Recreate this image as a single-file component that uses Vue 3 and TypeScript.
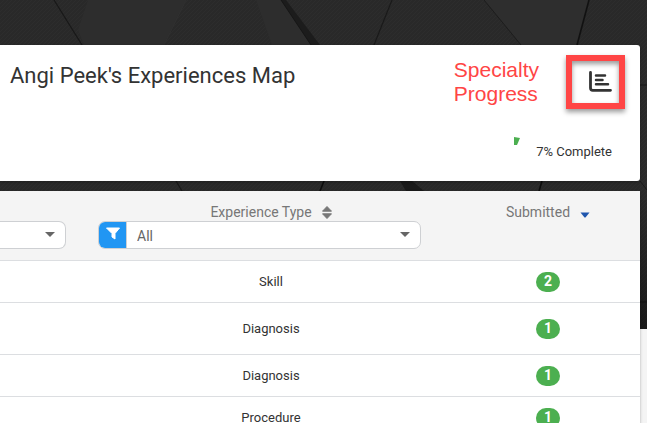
<script setup lang="ts">
import { ref } from 'vue'

interface Row {
  type: string
  submitted: number
  tall?: boolean
}

const rows: Row[] = [
  { type: 'Skill', submitted: 2 },
  { type: 'Diagnosis', submitted: 1, tall: true },
  { type: 'Diagnosis', submitted: 1 },
  { type: 'Procedure', submitted: 1 },
]

const nameFilter = ref('')
const typeFilter = ref('All')
</script>

<template>
  <div class="page">
    <svg class="backdrop" viewBox="0 0 647 329" preserveAspectRatio="xMaxYMin slice" aria-hidden="true">
      <defs>
        <pattern id="ribs" width="4" height="4" patternUnits="userSpaceOnUse">
          <rect width="4" height="4" fill="#292929" />
          <path d="M-1 1L1 -1M0 4L4 0M3 5L5 3" stroke="#2d2d2d" stroke-width="1" />
        </pattern>
        <linearGradient id="shade" x1="0" y1="0" x2="0" y2="1">
          <stop offset="0.6" stop-color="#000" stop-opacity="0" />
          <stop offset="1" stop-color="#000" stop-opacity="0.4" />
        </linearGradient>
      </defs>
      <rect width="647" height="329" fill="url(#ribs)" />
      <path d="M88 0H186L164 45H84L78 30Z" fill="#2d2d2d" />
      <path d="M256 0H281L311 45H272Z" fill="#2d2d2d" />
      <path d="M484 0H589L577 45H521Z" fill="#2e2e2e" />
      <path d="M54 0L82 45M176 181L182 191" stroke="#181818" stroke-width="1.2" />
      <path d="M281 0H286L320 45H311Z" fill="#1c1c1c" />
      <path d="M281 0L311 45" stroke="#161616" />
      <path d="M186 0L164 45" stroke="#303030" />
      <path d="M392 0L374 45" stroke="#1a1a1a" stroke-width="1.2" />
      <path d="M484 0L521 45" stroke="#1d1d1d" />
      <path d="M589 0L577 45" stroke="#111" stroke-width="1.6" />
      <path d="M324 181L320 191M542 181L539 191" stroke="#0d0d0d" stroke-width="1.6" />
      <path d="M400 181H412L424 191H406Z" fill="#1a1a1a" />
      <path d="M640 85H647M640 181L647 190M640 302H647" stroke="#191919" />
      <rect width="647" height="329" fill="url(#shade)" />
    </svg>

    <main class="content">
      <header class="card summary">
        <h1 class="title">Angi Peek's Experiences Map</h1>
        <p class="callout">Specialty<br />Progress</p>
        <button class="chart-button" type="button" aria-label="Specialty Progress">
          <svg width="24" height="22" viewBox="0 0 24 22" fill="none" stroke="#333" stroke-linecap="round" stroke-linejoin="round">
            <path d="M2.5 1.5V17Q2.5 19.3 4.8 19.3H22.5" stroke-width="2.8" />
            <path d="M8 4.6H17M8 9H14.5M8 13.3H20" stroke-width="2.5" />
          </svg>
        </button>
        <div class="progress">
          <svg width="28" height="28" viewBox="0 0 28 28" aria-hidden="true">
            <path d="M14 0L20 1L17 8H14Z" fill="#4caf50" />
          </svg>
          <span>7% Complete</span>
        </div>
      </header>

      <section class="card">
        <table class="grid">
          <colgroup>
            <col class="col-name" />
            <col />
            <col class="col-count" />
          </colgroup>
          <thead>
            <tr>
              <th>
                <div class="sort-space"></div>
                <div class="filter filter-name">
                  <select v-model="nameFilter" aria-label="Filter">
                    <option value=""></option>
                  </select>
                  <svg class="caret" width="10" height="5" viewBox="0 0 10 5"><path d="M0 0H10L5 5Z" fill="#666" /></svg>
                </div>
              </th>
              <th>
                <button class="sort" type="button">
                  Experience Type
                  <svg width="10" height="13" viewBox="0 0 10 13">
                    <path d="M5 0.5L9.5 5.2H0.5ZM0.5 7.8H9.5L5 12.5Z" fill="#777" stroke="#777" stroke-linejoin="round" />
                  </svg>
                </button>
                <div class="filter filter-type">
                  <button class="funnel" type="button" aria-label="Filter by type">
                    <svg width="14" height="13" viewBox="0 0 14 13">
                      <path d="M0.5 1H13.5L9 6.5V12L6 10V6.5Z" fill="#fff" stroke="#fff" stroke-linejoin="round" />
                    </svg>
                  </button>
                  <select v-model="typeFilter" aria-label="Experience Type">
                    <option>All</option>
                    <option>Skill</option>
                    <option>Diagnosis</option>
                    <option>Procedure</option>
                  </select>
                  <svg class="caret" width="10" height="5" viewBox="0 0 10 5"><path d="M0 0H10L5 5Z" fill="#666" /></svg>
                </div>
              </th>
              <th>
                <button class="sort" type="button">
                  Submitted
                  <svg class="sorted" width="10" height="6" viewBox="0 0 10 6"><path d="M0.5 0.5H9.5L5.5 5.5H4.5Z" fill="#1f55ad" /></svg>
                </button>
              </th>
            </tr>
          </thead>
          <tbody>
            <tr v-for="(row, i) in rows" :key="i" :class="{ tall: row.tall }">
              <td></td>
              <td>{{ row.type }}</td>
              <td><span class="badge">{{ row.submitted }}</span></td>
            </tr>
          </tbody>
        </table>
      </section>
    </main>
  </div>
</template>

<style>
body {
  margin: 0;
  background: #f4f4f4;
}
</style>

<style scoped>
.page {
  display: grid;
  grid-template-columns: minmax(0, 1fr);
  height: 100vh;
  overflow: hidden;
  font-family: Roboto, "Liberation Sans", sans-serif;
  font-size: 13px;
  color: #333;
}

.backdrop,
.content {
  grid-area: 1 / 1;
}

.backdrop {
  width: 100%;
  height: 329px;
}

.content {
  z-index: 1;
  display: flex;
  flex-direction: column;
  gap: 10px;
  padding: 45px 7px 0 0;
}

.card {
  background: #fff;
  border-radius: 0 3px 3px 0;
  box-shadow: 0 1px 3px rgba(0, 0, 0, 0.3);
}

.summary {
  display: grid;
  grid-template-columns: 1fr auto auto;
  column-gap: 27px;
  row-gap: 28px;
  align-items: start;
  padding: 10px 15px 16px 10px;
}

.title {
  margin: 8px 0 0;
  font-size: 22px;
  line-height: 26px;
  font-weight: 400;
}

.callout {
  margin: 3px 0 0;
  font-family: "Liberation Sans", Arial, sans-serif;
  font-size: 21px;
  line-height: 24px;
  color: #ff4545;
}

.chart-button {
  display: flex;
  align-items: center;
  justify-content: flex-end;
  width: 59px;
  height: 54px;
  padding: 0 7px 0 0;
  border: 6px solid #ff4545;
  background: #fff;
  box-shadow: 0 3px 5px rgba(0, 0, 0, 0.4), inset 0 3px 5px rgba(0, 0, 0, 0.4);
}

.progress {
  grid-column: 1 / -1;
  display: flex;
  align-items: center;
  justify-content: flex-end;
  gap: 8px;
  padding-right: 13px;
}

.grid {
  width: 100%;
  table-layout: fixed;
  border-collapse: collapse;
  text-align: center;
}

.col-name {
  width: 86px;
}

.col-count {
  width: 184px;
}

th {
  height: 69px;
  padding: 0;
  border-bottom: 1px solid #dcdee1;
  background: #f4f4f4;
  font-weight: 400;
  vertical-align: top;
}

.sort,
.sort-space {
  height: 18px;
  margin-top: 12px;
}

.sort {
  display: inline-flex;
  align-items: center;
  gap: 10px;
  padding: 0;
  border: 0;
  background: none;
  font: 400 14px/18px Roboto, "Liberation Sans", sans-serif;
  color: #777;
}

.sorted {
  margin-top: 6px;
}

.filter {
  display: flex;
  align-items: center;
  box-sizing: border-box;
  height: 28px;
  border: 1px solid #ced0d3;
  border-radius: 7px;
  background: #fff;
  overflow: hidden;
}

.filter-name {
  margin-right: 20px;
  border-left: 0;
  border-radius: 0 7px 7px 0;
}

.filter-type {
  margin: 0 35px 0 12px;
}

.filter select {
  flex: 1;
  min-width: 0;
  height: 26px;
  padding: 2px 10px 0;
  border: 0;
  background: none;
  appearance: none;
  font: 400 14px/18px Roboto, "Liberation Sans", sans-serif;
  color: #666;
}

.caret {
  flex: none;
  margin: 0 10px 2px 0;
}

.funnel {
  display: flex;
  align-items: center;
  justify-content: center;
  width: 28px;
  height: 26px;
  padding: 0 0 4px;
  border: 0;
  border-right: 1px solid #ced0d3;
  background: #2196f3;
}

td {
  height: 41px;
  padding: 0;
  border-bottom: 1px solid #dcdee1;
  line-height: 18px;
}

.tall td {
  height: 51px;
}

.badge {
  display: inline-block;
  width: 24px;
  height: 20px;
  border-radius: 10px;
  background: #4caf50;
  font-size: 14px;
  line-height: 19px;
  font-weight: 700;
  color: #fff;
  vertical-align: middle;
}
</style>
